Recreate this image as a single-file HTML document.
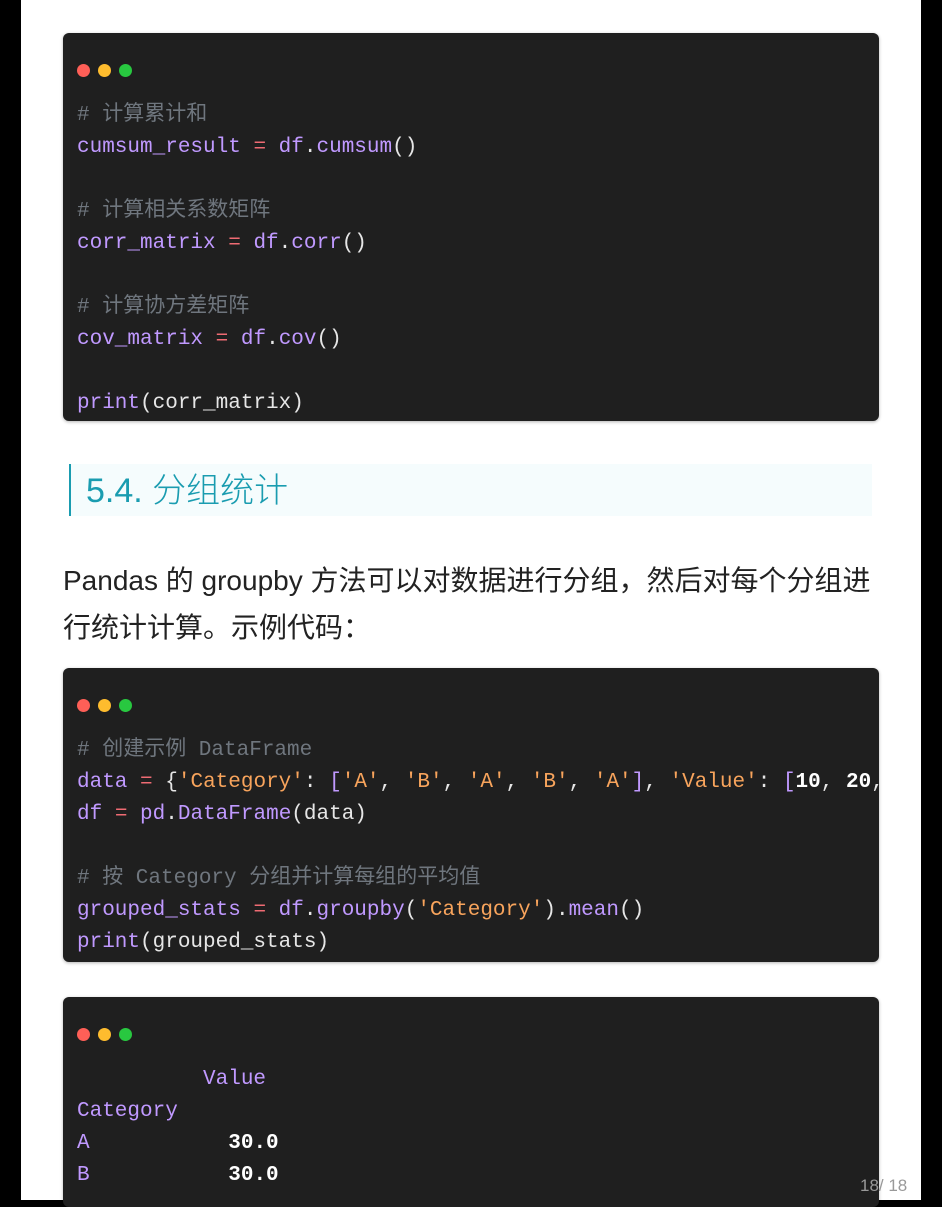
<!DOCTYPE html>
<html><head><meta charset="utf-8"><style>
*{margin:0;padding:0;box-sizing:border-box}
body{width:942px;height:1200px;overflow:hidden;background:#000;position:relative;font-family:"Liberation Sans","Noto Sans CJK SC",sans-serif}
.page{position:absolute;left:21px;top:0;width:900px;height:1200px;background:#fff}
.code{position:absolute;left:63px;width:816px;background:#1f1f1f;border-radius:6px;box-shadow:0 1px 3px rgba(0,0,0,.3);overflow:hidden}
.dot{position:absolute;width:13px;height:13px;border-radius:50%}
pre{position:absolute;left:77px;font-family:"Liberation Mono","Noto Sans CJK SC",monospace;font-size:21px;line-height:32px;color:#e6e6e6;white-space:pre}
.k{color:#c099ff}.s{color:#f8a45c}.o{color:#ef6b73}.c{color:#6f767e}.w{color:#fff;font-weight:bold}
</style></head><body>
<div class="page"></div>
<div class="code" style="top:33px;height:388px"></div>
<div class="code" style="top:668px;height:294px"></div>
<div class="code" style="top:997px;height:210px"></div>

<div class="dot" style="left:77px;top:64px;background:#fe5f57"></div>
<div class="dot" style="left:98px;top:64px;background:#febc2e"></div>
<div class="dot" style="left:119px;top:64px;background:#28c840"></div>
<pre style="top:100px"><span class="c"># 计算累计和</span>
<span class="k">cumsum_result</span> <span class="o">=</span> <span class="k">df</span>.<span class="k">cumsum</span>()

<span class="c"># 计算相关系数矩阵</span>
<span class="k">corr_matrix</span> <span class="o">=</span> <span class="k">df</span>.<span class="k">corr</span>()

<span class="c"># 计算协方差矩阵</span>
<span class="k">cov_matrix</span> <span class="o">=</span> <span class="k">df</span>.<span class="k">cov</span>()

<span class="k">print</span>(corr_matrix)</pre>

<div style="position:absolute;left:69px;top:464px;width:803px;height:52px;background:#f5fcfd;border-left:2px solid #1a9cb0"></div>
<div style="position:absolute;left:86px;top:470px;font-size:34px;line-height:42px;color:#1a9cb0;font-weight:300">5.4. 分组统计</div>

<div style="position:absolute;left:63px;top:557px;width:850px;font-size:28px;line-height:47px;color:#222;white-space:nowrap">Pandas 的 groupby 方法可以对数据进行分组，然后对每个分组进<br>行统计计算。示例代码：</div>

<div class="dot" style="left:77px;top:699px;background:#fe5f57"></div>
<div class="dot" style="left:98px;top:699px;background:#febc2e"></div>
<div class="dot" style="left:119px;top:699px;background:#28c840"></div>
<div style="position:absolute;left:63px;top:668px;width:816px;height:294px;overflow:hidden">
<pre style="left:14px;top:67px"><span class="c"># 创建示例 DataFrame</span>
<span class="k">data</span> <span class="o">=</span> {<span class="s">'Category'</span>: <span class="k">[</span><span class="s">'A'</span>, <span class="s">'B'</span>, <span class="s">'A'</span>, <span class="s">'B'</span>, <span class="s">'A'</span><span class="k">]</span>, <span class="s">'Value'</span>: <span class="k">[</span><span class="w">10</span>, <span class="w">20</span>, <span class="w">30</span>]}
<span class="k">df</span> <span class="o">=</span> <span class="k">pd</span>.<span class="k">DataFrame</span>(data)

<span class="c"># 按 Category 分组并计算每组的平均值</span>
<span class="k">grouped_stats</span> <span class="o">=</span> <span class="k">df</span>.<span class="k">groupby</span>(<span class="s">'Category'</span>).<span class="k">mean</span>()
<span class="k">print</span>(grouped_stats)</pre></div>

<div class="dot" style="left:77px;top:1028px;background:#fe5f57"></div>
<div class="dot" style="left:98px;top:1028px;background:#febc2e"></div>
<div class="dot" style="left:119px;top:1028px;background:#28c840"></div>
<pre style="top:1064px"><span class="k">          Value</span>
<span class="k">Category</span>
<span class="k">A</span>           <span class="w">30.0</span>
<span class="k">B</span>           <span class="w">30.0</span></pre>

<div style="position:absolute;left:860px;top:1176px;font-size:17px;color:#999">18/ 18</div>
</body></html>
